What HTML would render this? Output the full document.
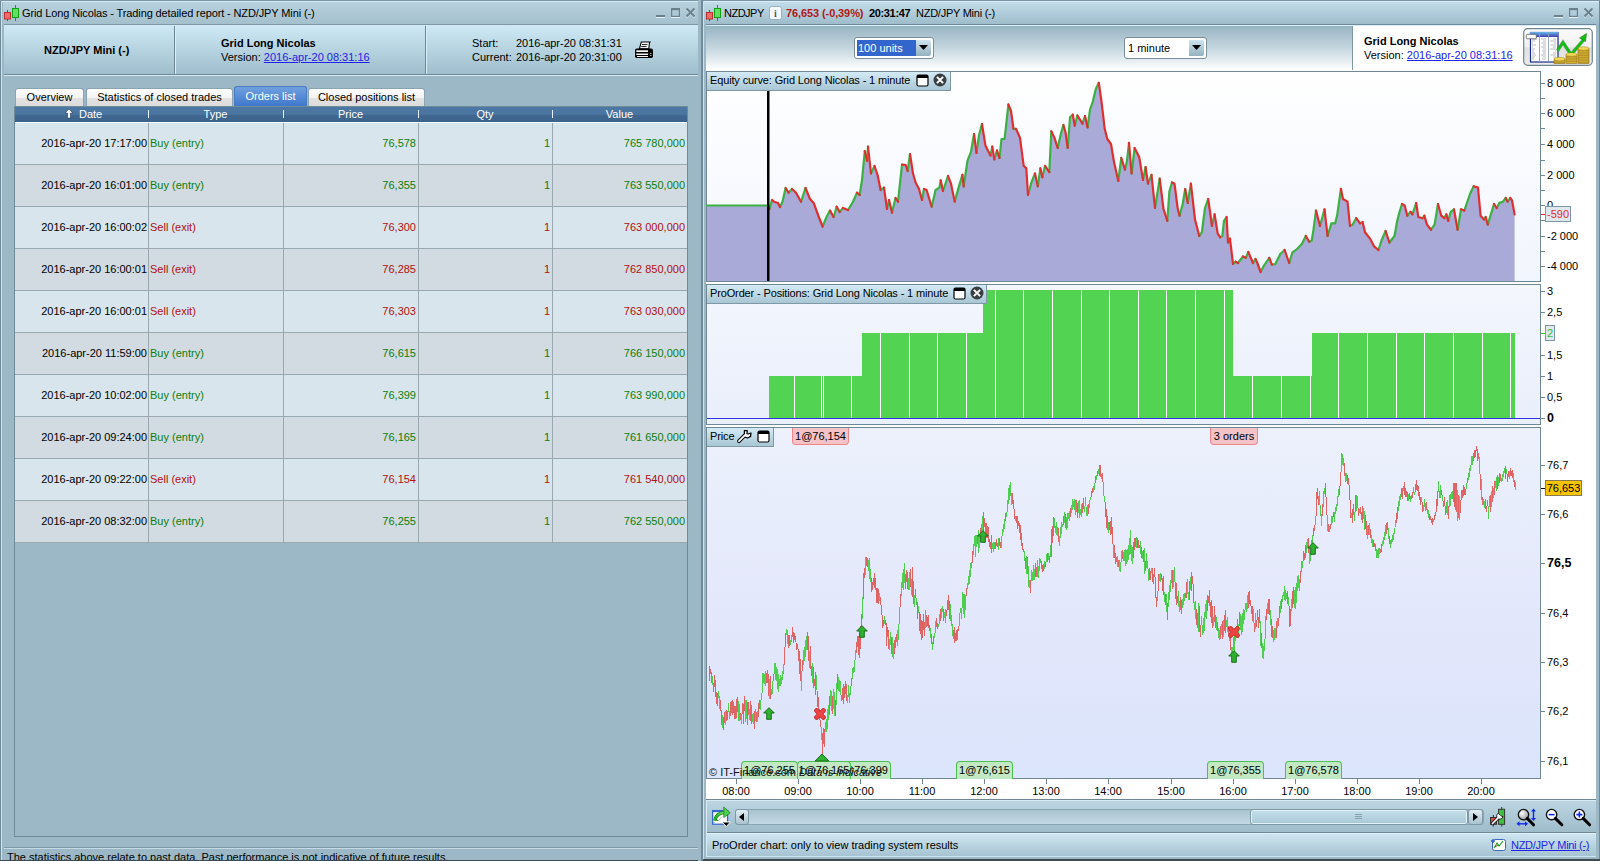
<!DOCTYPE html><html><head><meta charset="utf-8"><style>
*{margin:0;padding:0;box-sizing:border-box}
html,body{width:1600px;height:861px;overflow:hidden;background:#7d97a5;font-family:"Liberation Sans",sans-serif;font-size:11px;color:#000}
.a{position:absolute}
.t{position:absolute;white-space:nowrap;line-height:13px}
.b{font-weight:bold}
.lnk{color:#2323e8;text-decoration:underline}
</style></head><body>
<div class="a" style="left:0;top:0;width:701px;height:861px;background:#9cb8c6;border-left:1px solid #6f8a98"></div>
<div class="a" style="left:1px;top:0;width:1px;height:861px;background:#c9e2ee"></div>
<div class="a" style="left:3px;top:0;width:698px;height:24px;background:linear-gradient(#b9d3df,#a4c0cd);border-top:1px solid #7f98a5"></div>
<div class="a" style="left:0;top:0;width:701px;height:1px;background:#7c95a2"></div>
<div class="a" style="left:2px;top:1px;width:696px;height:1px;background:#d5ecf6"></div>
<svg class="a" style="left:4px;top:5px" width="16" height="18" viewBox="0 0 16 18"><path d="M3.5 5 V16" stroke="#b83030" stroke-width="1"/><rect x="0.5" y="7.5" width="6" height="6.5" fill="#f06a6a" stroke="#b83030"/><path d="M11.5 0 V16" stroke="#10a010" stroke-width="1"/><rect x="8.5" y="3.5" width="6" height="9" fill="#60e060" stroke="#10a010"/></svg>
<div class="t" style="left:22px;top:7px;letter-spacing:-0.12px">Grid Long Nicolas - Trading detailed report - NZD/JPY Mini (-)</div>
<svg class="a" style="left:655px;top:7px" width="42" height="13" viewBox="0 0 42 13"><rect x="1" y="9" width="9" height="2" fill="#e4f2f8"/><rect x="1" y="8" width="9" height="2" fill="#6a818c"/><rect x="16" y="10" width="9" height="1" fill="#e4f2f8"/><rect x="16.6" y="1.6" width="7.8" height="7.8" fill="none" stroke="#6a818c" stroke-width="1.2"/><rect x="16" y="1" width="9" height="2.2" fill="#6a818c"/><path d="M31.5 2.5 L39.5 10.5 M39.5 2.5 L31.5 10.5" stroke="#e4f2f8" stroke-width="1.4"/><path d="M31.5 1.5 L39.5 9.5 M39.5 1.5 L31.5 9.5" stroke="#6a818c" stroke-width="2"/></svg>
<div class="a" style="left:4px;top:24px;width:694px;height:51px;background:linear-gradient(#cfeaf6,#9fbdcc);border-top:1px solid #7f98a5;border-bottom:1px solid #6f8894"></div>
<div class="a" style="left:4px;top:75px;width:694px;height:1px;background:#d5e9f2"></div>
<div class="a" style="left:174px;top:26px;width:1px;height:48px;background:#6f8894"></div>
<div class="a" style="left:175px;top:26px;width:1px;height:48px;background:#d8eef8"></div>
<div class="a" style="left:425px;top:26px;width:1px;height:48px;background:#6f8894"></div>
<div class="a" style="left:426px;top:26px;width:1px;height:48px;background:#d8eef8"></div>
<div class="t b" style="left:44px;top:44px">NZD/JPY Mini (-)</div>
<div class="t b" style="left:221px;top:37px">Grid Long Nicolas</div>
<div class="t" style="left:221px;top:51px">Version: <span class="lnk">2016-apr-20 08:31:16</span></div>
<div class="t" style="left:472px;top:37px">Start:</div>
<div class="t" style="left:516px;top:37px">2016-apr-20 08:31:31</div>
<div class="t" style="left:472px;top:51px">Current:</div>
<div class="t" style="left:516px;top:51px">2016-apr-20 20:31:00</div>
<svg class="a" style="left:634px;top:41px" width="20" height="18" viewBox="0 0 20 18"><path d="M7.3 1 H16 L15.4 2.2 L14.8 7.8 H5.4 Z" fill="#fff" stroke="#000" stroke-width="1.1"/><path d="M8 3.6 H13.5 M7.2 5.6 H12.5" stroke="#000" stroke-width="0.9"/><rect x="1" y="7.6" width="18" height="9.4" rx="1.8" fill="#000"/><path d="M2.3 9.3 H14 V11 H2.3 Z M2.3 12.4 H14 V14.1 H2.3 Z M3 15 H14 V16 H3 Z" fill="#f4f4f4"/><circle cx="16.8" cy="12.3" r="0.6" fill="#fff"/><circle cx="16.8" cy="14.3" r="0.6" fill="#fff"/></svg>
<div class="a" style="left:15px;top:88px;width:69px;height:18px;background:linear-gradient(#ffffff 0%,#f4f4f4 50%,#e2e2e2 55%,#dcdcdc 100%);border:1px solid #8aa4b1;border-bottom:none;border-radius:3px 3px 0 0"></div>
<div class="t" style="left:15px;top:91px;width:69px;text-align:center">Overview</div>
<div class="a" style="left:86px;top:88px;width:147px;height:18px;background:linear-gradient(#ffffff 0%,#f4f4f4 50%,#e2e2e2 55%,#dcdcdc 100%);border:1px solid #8aa4b1;border-bottom:none;border-radius:3px 3px 0 0"></div>
<div class="t" style="left:86px;top:91px;width:147px;text-align:center">Statistics of closed trades</div>
<div class="a" style="left:234px;top:86px;width:73px;height:20px;background:linear-gradient(#6fa0e0,#3f78cc);border:1px solid #4a7bbf;border-bottom:none;border-radius:3px 3px 0 0"></div>
<div class="t" style="left:234px;top:90px;width:73px;text-align:center;color:#fff">Orders list</div>
<div class="a" style="left:308px;top:88px;width:117px;height:18px;background:linear-gradient(#ffffff 0%,#f4f4f4 50%,#e2e2e2 55%,#dcdcdc 100%);border:1px solid #8aa4b1;border-bottom:none;border-radius:3px 3px 0 0"></div>
<div class="t" style="left:308px;top:91px;width:117px;text-align:center">Closed positions list</div>
<div class="a" style="left:14px;top:106px;width:674px;height:731px;border:1px solid #6f8a98"></div>
<div class="a" style="left:15px;top:107px;width:672px;height:15px;background:linear-gradient(#4d78a4 0%,#4a74a0 50%,#3f6790 55%,#3d638c 100%)"></div>
<div class="t" style="left:79px;top:108px;color:#fff">Date</div>
<div class="t" style="left:148px;top:108px;width:135px;text-align:center;color:#fff">Type</div>
<div class="a" style="left:148px;top:110px;width:1px;height:8px;background:#e8f0f8"></div>
<div class="t" style="left:283px;top:108px;width:135px;text-align:center;color:#fff">Price</div>
<div class="a" style="left:283px;top:110px;width:1px;height:8px;background:#e8f0f8"></div>
<div class="t" style="left:418px;top:108px;width:134px;text-align:center;color:#fff">Qty</div>
<div class="a" style="left:418px;top:110px;width:1px;height:8px;background:#e8f0f8"></div>
<div class="t" style="left:552px;top:108px;width:135px;text-align:center;color:#fff">Value</div>
<div class="a" style="left:552px;top:110px;width:1px;height:8px;background:#e8f0f8"></div>
<svg class="a" style="left:64px;top:108px" width="10" height="12" viewBox="0 0 10 12"><path d="M5 1 L9 5 L6.5 5 L6.5 10 L3.5 10 L3.5 5 L1 5 Z" fill="#fff" stroke="#203c60" stroke-width="0.6"/></svg>
<div class="a" style="left:15px;top:123px;width:672px;height:42px;background:#d8e5ec;border-bottom:1px solid #9aa8b2"></div>
<div class="t" style="left:15px;top:137px;width:132px;text-align:right">2016-apr-20 17:17:00</div>
<div class="t" style="left:150px;top:137px;color:#0c800c">Buy (entry)</div>
<div class="t" style="left:283px;top:137px;width:133px;text-align:right;color:#0c800c">76,578</div>
<div class="t" style="left:418px;top:137px;width:132px;text-align:right;color:#0c800c">1</div>
<div class="t" style="left:552px;top:137px;width:133px;text-align:right;color:#0c800c">765 780,000</div>
<div class="a" style="left:15px;top:165px;width:672px;height:42px;background:#d2dae2;border-bottom:1px solid #9aa8b2"></div>
<div class="t" style="left:15px;top:179px;width:132px;text-align:right">2016-apr-20 16:01:00</div>
<div class="t" style="left:150px;top:179px;color:#0c800c">Buy (entry)</div>
<div class="t" style="left:283px;top:179px;width:133px;text-align:right;color:#0c800c">76,355</div>
<div class="t" style="left:418px;top:179px;width:132px;text-align:right;color:#0c800c">1</div>
<div class="t" style="left:552px;top:179px;width:133px;text-align:right;color:#0c800c">763 550,000</div>
<div class="a" style="left:15px;top:207px;width:672px;height:42px;background:#d8e5ec;border-bottom:1px solid #9aa8b2"></div>
<div class="t" style="left:15px;top:221px;width:132px;text-align:right">2016-apr-20 16:00:02</div>
<div class="t" style="left:150px;top:221px;color:#b01010">Sell (exit)</div>
<div class="t" style="left:283px;top:221px;width:133px;text-align:right;color:#b01010">76,300</div>
<div class="t" style="left:418px;top:221px;width:132px;text-align:right;color:#b01010">1</div>
<div class="t" style="left:552px;top:221px;width:133px;text-align:right;color:#b01010">763 000,000</div>
<div class="a" style="left:15px;top:249px;width:672px;height:42px;background:#d2dae2;border-bottom:1px solid #9aa8b2"></div>
<div class="t" style="left:15px;top:263px;width:132px;text-align:right">2016-apr-20 16:00:01</div>
<div class="t" style="left:150px;top:263px;color:#b01010">Sell (exit)</div>
<div class="t" style="left:283px;top:263px;width:133px;text-align:right;color:#b01010">76,285</div>
<div class="t" style="left:418px;top:263px;width:132px;text-align:right;color:#b01010">1</div>
<div class="t" style="left:552px;top:263px;width:133px;text-align:right;color:#b01010">762 850,000</div>
<div class="a" style="left:15px;top:291px;width:672px;height:42px;background:#d8e5ec;border-bottom:1px solid #9aa8b2"></div>
<div class="t" style="left:15px;top:305px;width:132px;text-align:right">2016-apr-20 16:00:01</div>
<div class="t" style="left:150px;top:305px;color:#b01010">Sell (exit)</div>
<div class="t" style="left:283px;top:305px;width:133px;text-align:right;color:#b01010">76,303</div>
<div class="t" style="left:418px;top:305px;width:132px;text-align:right;color:#b01010">1</div>
<div class="t" style="left:552px;top:305px;width:133px;text-align:right;color:#b01010">763 030,000</div>
<div class="a" style="left:15px;top:333px;width:672px;height:42px;background:#d2dae2;border-bottom:1px solid #9aa8b2"></div>
<div class="t" style="left:15px;top:347px;width:132px;text-align:right">2016-apr-20 11:59:00</div>
<div class="t" style="left:150px;top:347px;color:#0c800c">Buy (entry)</div>
<div class="t" style="left:283px;top:347px;width:133px;text-align:right;color:#0c800c">76,615</div>
<div class="t" style="left:418px;top:347px;width:132px;text-align:right;color:#0c800c">1</div>
<div class="t" style="left:552px;top:347px;width:133px;text-align:right;color:#0c800c">766 150,000</div>
<div class="a" style="left:15px;top:375px;width:672px;height:42px;background:#d8e5ec;border-bottom:1px solid #9aa8b2"></div>
<div class="t" style="left:15px;top:389px;width:132px;text-align:right">2016-apr-20 10:02:00</div>
<div class="t" style="left:150px;top:389px;color:#0c800c">Buy (entry)</div>
<div class="t" style="left:283px;top:389px;width:133px;text-align:right;color:#0c800c">76,399</div>
<div class="t" style="left:418px;top:389px;width:132px;text-align:right;color:#0c800c">1</div>
<div class="t" style="left:552px;top:389px;width:133px;text-align:right;color:#0c800c">763 990,000</div>
<div class="a" style="left:15px;top:417px;width:672px;height:42px;background:#d2dae2;border-bottom:1px solid #9aa8b2"></div>
<div class="t" style="left:15px;top:431px;width:132px;text-align:right">2016-apr-20 09:24:00</div>
<div class="t" style="left:150px;top:431px;color:#0c800c">Buy (entry)</div>
<div class="t" style="left:283px;top:431px;width:133px;text-align:right;color:#0c800c">76,165</div>
<div class="t" style="left:418px;top:431px;width:132px;text-align:right;color:#0c800c">1</div>
<div class="t" style="left:552px;top:431px;width:133px;text-align:right;color:#0c800c">761 650,000</div>
<div class="a" style="left:15px;top:459px;width:672px;height:42px;background:#d8e5ec;border-bottom:1px solid #9aa8b2"></div>
<div class="t" style="left:15px;top:473px;width:132px;text-align:right">2016-apr-20 09:22:00</div>
<div class="t" style="left:150px;top:473px;color:#b01010">Sell (exit)</div>
<div class="t" style="left:283px;top:473px;width:133px;text-align:right;color:#b01010">76,154</div>
<div class="t" style="left:418px;top:473px;width:132px;text-align:right;color:#b01010">1</div>
<div class="t" style="left:552px;top:473px;width:133px;text-align:right;color:#b01010">761 540,000</div>
<div class="a" style="left:15px;top:501px;width:672px;height:42px;background:#d2dae2;border-bottom:1px solid #9aa8b2"></div>
<div class="t" style="left:15px;top:515px;width:132px;text-align:right">2016-apr-20 08:32:00</div>
<div class="t" style="left:150px;top:515px;color:#0c800c">Buy (entry)</div>
<div class="t" style="left:283px;top:515px;width:133px;text-align:right;color:#0c800c">76,255</div>
<div class="t" style="left:418px;top:515px;width:132px;text-align:right;color:#0c800c">1</div>
<div class="t" style="left:552px;top:515px;width:133px;text-align:right;color:#0c800c">762 550,000</div>
<div class="a" style="left:15px;top:122px;width:672px;height:1px;background:#fff"></div>
<div class="a" style="left:148px;top:123px;width:1px;height:420px;background:#9aa8b2"></div>
<div class="a" style="left:283px;top:123px;width:1px;height:420px;background:#9aa8b2"></div>
<div class="a" style="left:418px;top:123px;width:1px;height:420px;background:#9aa8b2"></div>
<div class="a" style="left:552px;top:123px;width:1px;height:420px;background:#9aa8b2"></div>
<div class="a" style="left:4px;top:847px;width:694px;height:1px;background:#7f98a5"></div>
<div class="a" style="left:4px;top:848px;width:694px;height:1px;background:#c5dce7"></div>
<div class="t" style="left:7px;top:851px">The statistics above relate to past data. Past performance is not indicative of future results.</div>
<div class="a" style="left:0;top:860px;width:701px;height:1px;background:#3c4a52"></div>
<div class="a" style="left:698px;top:0;width:3px;height:861px;background:#9cb8c6"></div>
<div class="a" style="left:701px;top:0;width:2px;height:861px;background:#71899a"></div>
<div class="a" style="left:703px;top:0;width:897px;height:861px;background:#9cb8c6"></div>
<div class="a" style="left:703px;top:0;width:1px;height:861px;background:#c9e2ee"></div>
<div class="a" style="left:1599px;top:0;width:1px;height:861px;background:#6f8a98"></div>
<div class="a" style="left:703px;top:0;width:897px;height:1px;background:#7c95a2"></div>
<div class="a" style="left:704px;top:1px;width:895px;height:23px;background:linear-gradient(#c4dfeb,#9fbccb)"></div>
<div class="a" style="left:704px;top:1px;width:895px;height:1px;background:#d8eef8"></div>
<svg class="a" style="left:706px;top:5px" width="16" height="18" viewBox="0 0 16 18"><path d="M3.5 5 V16" stroke="#b83030" stroke-width="1"/><rect x="0.5" y="7.5" width="6" height="6.5" fill="#f06a6a" stroke="#b83030"/><path d="M11.5 0 V16" stroke="#10a010" stroke-width="1"/><rect x="8.5" y="3.5" width="6" height="9" fill="#60e060" stroke="#10a010"/></svg>
<div class="t" style="left:724px;top:7px;letter-spacing:-0.5px">NZDJPY</div>
<svg class="a" style="left:769px;top:6px" width="13" height="14" viewBox="0 0 13 14"><rect x="0.5" y="0.5" width="12" height="13" rx="2" fill="#f4f8fa" stroke="#9ab0bc"/><text x="6.5" y="11" font-family="Liberation Serif" font-weight="bold" font-size="10" text-anchor="middle" fill="#4a5a66">i</text></svg>
<div class="t b" style="left:786px;top:7px;color:#b01818;letter-spacing:-0.1px">76,653 (-0,39%)</div>
<div class="t b" style="left:869px;top:7px;letter-spacing:-0.35px">20:31:47</div>
<div class="t" style="left:916px;top:7px;letter-spacing:-0.25px">NZD/JPY Mini (-)</div>
<svg class="a" style="left:1553px;top:7px" width="42" height="13" viewBox="0 0 42 13"><rect x="1" y="9" width="9" height="2" fill="#e4f2f8"/><rect x="1" y="8" width="9" height="2" fill="#6a818c"/><rect x="16" y="10" width="9" height="1" fill="#e4f2f8"/><rect x="16.6" y="1.6" width="7.8" height="7.8" fill="none" stroke="#6a818c" stroke-width="1.2"/><rect x="16" y="1" width="9" height="2.2" fill="#6a818c"/><path d="M31.5 2.5 L39.5 10.5 M39.5 2.5 L31.5 10.5" stroke="#e4f2f8" stroke-width="1.4"/><path d="M31.5 1.5 L39.5 9.5 M39.5 1.5 L31.5 9.5" stroke="#6a818c" stroke-width="2"/></svg>
<div class="a" style="left:706px;top:24px;width:890px;height:1px;background:#70899a"></div>
<div class="a" style="left:706px;top:25px;width:890px;height:1px;background:#d8eef8"></div>
<div class="a" style="left:706px;top:26px;width:646px;height:44px;background:linear-gradient(#98b4c3 0%,#c4d6df 50%,#ffffff 100%)"></div>
<div class="a" style="left:1352px;top:26px;width:244px;height:44px;background:#fff;border-left:1px solid #7f98a5"></div>
<div class="a" style="left:854px;top:37px;width:80px;height:22px;background:#fff;border:1px solid #7b8f99;border-radius:3px"></div>
<div class="a" style="left:857px;top:40px;width:59px;height:16px;background:#3366cc"></div>
<div class="t" style="left:858px;top:42px;color:#fff">100 units</div>
<div class="a" style="left:916px;top:40px;width:15px;height:16px;background:linear-gradient(#cfe5ef,#93b1bf);border-radius:0 2px 2px 0"></div>
<svg class="a" style="left:919px;top:45px" width="9" height="6"><path d="M0 0 H9 L4.5 5 Z" fill="#000"/></svg>
<div class="a" style="left:1124px;top:37px;width:83px;height:22px;background:#fff;border:1px solid #7b8f99;border-radius:3px"></div>
<div class="t" style="left:1128px;top:42px">1 minute</div>
<div class="a" style="left:1189px;top:40px;width:15px;height:16px;background:linear-gradient(#cfe5ef,#93b1bf);border-radius:0 2px 2px 0"></div>
<svg class="a" style="left:1192px;top:45px" width="9" height="6"><path d="M0 0 H9 L4.5 5 Z" fill="#000"/></svg>
<div class="t b" style="left:1364px;top:35px">Grid Long Nicolas</div>
<div class="t" style="left:1364px;top:49px">Version: <span class="lnk">2016-apr-20 08:31:16</span></div>
<svg class="a" style="left:1523px;top:28px" width="70" height="38" viewBox="0 0 70 38"><defs><linearGradient id="rg" x1="0" y1="0" x2="0" y2="1"><stop offset="0" stop-color="#fbfbfb"/><stop offset="0.5" stop-color="#f0f0f0"/><stop offset="0.52" stop-color="#e0e0e0"/><stop offset="1" stop-color="#ececec"/></linearGradient><linearGradient id="th" x1="0" y1="0" x2="0" y2="1"><stop offset="0" stop-color="#68b8e8"/><stop offset="1" stop-color="#4040b0"/></linearGradient></defs><rect x="0.7" y="0.7" width="68.6" height="36.6" rx="4" fill="url(#rg)" stroke="#6f8590" stroke-width="1.2"/><rect x="7.5" y="4.5" width="27.5" height="29.5" fill="#fff" stroke="#1a2a90" stroke-width="1.2"/><rect x="7" y="4" width="28" height="5" fill="url(#th)"/><path d="M16.5 5 V33.5 M25.5 5 V33.5" stroke="#8aa0b8" stroke-width="0.9"/><path d="M9 11 H14 M9 13 H12 M9 15 H10 M9 17 H13 M9 19 H10 M9 21 H12 M9 23 H11 M9 25 H12 M9 27 H13 M9 29 H12 M9 31 H11 M18 11 H23 M20 13 H23 M18.5 15 H23 M20 17 H23 M18 19 H23 M20 21 H23 M19 23 H23 M20 25 H23 M18 27 H23 M20 29 H23 M19 31 H23 M30 11 H33 M27 13 H33 M31 15 H33 M27.5 17 H33 M30 19 H33 M27 21 H33 M32 23 H33 M30 25 H33 M27.5 27 H33 M30 29 H33" stroke="#777" stroke-width="0.5"/><rect x="3.3" y="6.3" width="10" height="4.5" rx="1" fill="#fff" stroke="#555" stroke-width="0.8"/><path d="M34.5 22.5 L40 14.5 L48 26.5 L60.5 12" fill="none" stroke="#000" stroke-width="3.6" stroke-linejoin="miter" opacity="0.35"/><path d="M34.5 22.5 L40 14.5 L48 26.5 L60.5 12" fill="none" stroke="#10c010" stroke-width="2.6" stroke-linejoin="miter"/><path d="M56.5 10 L63.5 5.5 L62.5 13.5 Z" fill="#10c010" stroke="#0a6a0a" stroke-width="0.5"/><rect x="31" y="31" width="11" height="4.5" fill="#d8b434" stroke="#8a6a18" stroke-width="0.6"/><path d="M31 33.0H42M31 34.7H42" stroke="#9a7a20" stroke-width="0.6"/><ellipse cx="36.5" cy="31" rx="5.5" ry="1.8" fill="#f0d858" stroke="#a08020" stroke-width="0.5"/><rect x="43" y="26.5" width="11" height="9.0" fill="#d8b434" stroke="#8a6a18" stroke-width="0.6"/><path d="M43 28.5H54M43 30.2H54M43 31.9H54M43 33.6H54" stroke="#9a7a20" stroke-width="0.6"/><ellipse cx="48.5" cy="26.5" rx="5.5" ry="1.8" fill="#f0d858" stroke="#a08020" stroke-width="0.5"/><rect x="55" y="20.5" width="11" height="15.0" fill="#d8b434" stroke="#8a6a18" stroke-width="0.6"/><path d="M55 22.5H66M55 24.2H66M55 25.9H66M55 27.6H66M55 29.3H66M55 31.0H66M55 32.7H66M55 34.4H66" stroke="#9a7a20" stroke-width="0.6"/><ellipse cx="60.5" cy="20.5" rx="5.5" ry="1.8" fill="#f0d858" stroke="#a08020" stroke-width="0.5"/></svg>
<div class="a" style="left:706px;top:70px;width:890px;height:729px;background:#fff"></div>
<div class="a" style="left:706px;top:71px;width:835px;height:211px;background:linear-gradient(#ffffff,#f1f5fd);border:1px solid #6f8894"></div>

<div class="a" style="left:706px;top:284px;width:835px;height:141px;background:linear-gradient(#f3f6fd,#e9effb);border:1px solid #6f8894"></div>
<div class="a" style="left:706px;top:427px;width:835px;height:352px;background:linear-gradient(#ecf1fc 0%,#e2e6fb 60%,#dbe5fb 100%);border:1px solid #6f8894"></div>
<svg class="a" style="left:0;top:0" width="1600" height="861" viewBox="0 0 1600 861"><polygon points="707,281 707.0,205.5 768.0,205.5 769.5,209.0 772.0,200.0 774.0,201.7 778.0,203.0 780.0,207.0 782.5,201.7 785.6,188.0 788.6,192.7 792.0,189.0 796.0,192.7 801.0,201.7 805.5,188.0 810.0,199.0 813.7,203.0 818.8,217.0 822.6,226.5 826.5,217.0 830.0,210.6 833.6,217.0 836.7,206.7 839.7,212.0 843.0,208.0 848.0,210.0 853.0,201.7 857.0,192.7 859.7,195.0 862.0,180.0 864.8,151.0 867.0,160.8 868.0,146.7 871.0,173.5 874.5,166.0 877.6,175.0 880.6,190.0 884.0,187.6 887.0,209.0 889.0,200.0 892.0,212.7 895.5,198.0 898.0,201.7 902.0,164.6 905.7,165.0 907.7,171.0 910.0,154.0 913.0,173.5 915.6,182.5 919.0,189.0 922.0,200.0 924.0,189.0 926.6,190.0 931.7,206.7 935.6,190.0 939.4,187.6 940.7,180.4 943.0,191.0 948.0,176.0 951.0,183.7 954.7,201.6 958.6,187.6 962.4,174.8 963.7,186.3 967.5,160.7 971.0,151.8 974.0,134.0 976.5,153.0 979.0,135.2 982.0,124.0 985.4,145.4 990.5,155.6 992.3,146.7 994.3,159.5 997.0,150.5 999.5,158.0 1001.5,139.0 1004.6,139.0 1008.4,104.5 1011.0,111.0 1013.5,128.8 1016.0,128.8 1020.0,137.7 1023.7,165.8 1026.3,168.4 1028.0,195.0 1031.4,182.5 1035.0,173.5 1037.8,186.3 1040.4,168.4 1042.4,177.3 1045.0,165.8 1049.3,172.2 1051.3,131.3 1054.4,137.7 1057.7,148.0 1060.8,134.0 1063.4,125.0 1065.6,132.6 1067.7,148.0 1070.0,117.3 1072.8,114.7 1074.8,125.7 1077.4,115.5 1082.5,123.7 1085.0,116.0 1087.6,127.5 1090.0,109.6 1092.7,102.0 1095.8,89.0 1098.8,82.8 1101.4,100.7 1104.7,128.8 1107.3,139.0 1111.0,144.0 1114.0,162.0 1118.3,181.0 1121.3,158.0 1125.0,169.6 1127.0,160.7 1129.0,142.8 1131.6,173.5 1134.6,148.0 1139.2,157.0 1143.0,180.0 1145.6,167.0 1148.0,183.7 1151.5,174.8 1155.0,208.0 1159.7,178.6 1163.5,209.0 1167.3,220.8 1169.4,191.4 1172.0,182.5 1174.5,183.7 1177.6,208.0 1179.6,215.7 1182.7,204.0 1185.2,189.0 1187.8,203.0 1190.9,183.7 1195.0,219.5 1199.3,236.0 1201.9,232.0 1205.0,208.0 1208.2,199.0 1212.0,226.0 1214.6,214.4 1217.7,233.6 1220.2,237.4 1222.3,236.0 1224.0,220.8 1226.6,217.0 1228.0,242.5 1230.0,238.6 1233.0,264.0 1235.6,261.7 1238.0,263.0 1243.0,256.5 1245.8,257.8 1248.3,252.0 1253.0,263.0 1255.5,259.0 1257.3,263.0 1260.6,272.0 1264.0,265.5 1269.3,257.8 1271.9,264.7 1275.2,264.2 1280.3,254.0 1284.6,250.0 1289.2,263.0 1292.3,252.7 1297.0,249.0 1302.0,243.8 1305.8,236.0 1309.2,241.7 1311.7,240.7 1313.5,229.7 1316.0,210.6 1320.0,226.0 1324.5,209.3 1327.6,236.0 1331.4,223.3 1335.2,223.3 1337.3,214.4 1340.9,188.8 1343.0,199.0 1347.5,201.6 1350.0,226.0 1352.6,224.6 1356.2,218.2 1360.0,223.3 1362.6,222.0 1365.0,232.3 1370.0,238.6 1374.0,246.3 1378.4,250.0 1381.7,240.0 1385.6,231.0 1389.4,242.5 1394.5,236.0 1397.0,222.0 1398.8,214.4 1402.0,204.0 1404.7,205.4 1407.3,215.7 1410.6,211.8 1412.4,214.4 1416.2,203.0 1418.3,217.0 1422.6,218.2 1424.4,215.7 1427.0,224.6 1431.0,229.7 1434.6,224.6 1438.0,204.0 1441.3,215.7 1444.3,218.2 1446.4,214.4 1448.2,221.0 1450.7,211.8 1454.0,209.3 1457.6,229.7 1461.0,209.3 1464.3,210.6 1470.0,194.0 1473.7,186.3 1478.0,187.6 1480.6,215.7 1484.0,219.5 1485.7,217.0 1487.8,224.6 1494.0,204.0 1496.7,208.0 1499.3,203.0 1503.0,201.6 1505.7,198.0 1507.7,201.6 1510.3,198.0 1512.0,200.3 1514.6,214.4 1514.6,281" fill="#aaaad9"/><path d="M707.0 205.5L768.0 205.5M769.5 209.0L772.0 200.0M780.0 207.0L782.5 201.7M782.5 201.7L785.6 188.0M788.6 192.7L792.0 189.0M801.0 201.7L805.5 188.0M822.6 226.5L826.5 217.0M826.5 217.0L830.0 210.6M833.6 217.0L836.7 206.7M839.7 212.0L843.0 208.0M848.0 210.0L853.0 201.7M853.0 201.7L857.0 192.7M859.7 195.0L862.0 180.0M862.0 180.0L864.8 151.0M867.0 160.8L868.0 146.7M871.0 173.5L874.5 166.0M880.6 190.0L884.0 187.6M887.0 209.0L889.0 200.0M892.0 212.7L895.5 198.0M898.0 201.7L902.0 164.6M907.7 171.0L910.0 154.0M922.0 200.0L924.0 189.0M931.7 206.7L935.6 190.0M935.6 190.0L939.4 187.6M939.4 187.6L940.7 180.4M943.0 191.0L948.0 176.0M954.7 201.6L958.6 187.6M958.6 187.6L962.4 174.8M963.7 186.3L967.5 160.7M967.5 160.7L971.0 151.8M971.0 151.8L974.0 134.0M976.5 153.0L979.0 135.2M979.0 135.2L982.0 124.0M990.5 155.6L992.3 146.7M994.3 159.5L997.0 150.5M999.5 158.0L1001.5 139.0M1001.5 139.0L1004.6 139.0M1004.6 139.0L1008.4 104.5M1013.5 128.8L1016.0 128.8M1028.0 195.0L1031.4 182.5M1031.4 182.5L1035.0 173.5M1037.8 186.3L1040.4 168.4M1042.4 177.3L1045.0 165.8M1049.3 172.2L1051.3 131.3M1057.7 148.0L1060.8 134.0M1060.8 134.0L1063.4 125.0M1067.7 148.0L1070.0 117.3M1070.0 117.3L1072.8 114.7M1074.8 125.7L1077.4 115.5M1082.5 123.7L1085.0 116.0M1087.6 127.5L1090.0 109.6M1090.0 109.6L1092.7 102.0M1092.7 102.0L1095.8 89.0M1095.8 89.0L1098.8 82.8M1118.3 181.0L1121.3 158.0M1125.0 169.6L1127.0 160.7M1127.0 160.7L1129.0 142.8M1131.6 173.5L1134.6 148.0M1143.0 180.0L1145.6 167.0M1148.0 183.7L1151.5 174.8M1155.0 208.0L1159.7 178.6M1167.3 220.8L1169.4 191.4M1169.4 191.4L1172.0 182.5M1179.6 215.7L1182.7 204.0M1182.7 204.0L1185.2 189.0M1187.8 203.0L1190.9 183.7M1199.3 236.0L1201.9 232.0M1201.9 232.0L1205.0 208.0M1205.0 208.0L1208.2 199.0M1212.0 226.0L1214.6 214.4M1220.2 237.4L1222.3 236.0M1222.3 236.0L1224.0 220.8M1224.0 220.8L1226.6 217.0M1228.0 242.5L1230.0 238.6M1233.0 264.0L1235.6 261.7M1238.0 263.0L1243.0 256.5M1245.8 257.8L1248.3 252.0M1253.0 263.0L1255.5 259.0M1260.6 272.0L1264.0 265.5M1264.0 265.5L1269.3 257.8M1271.9 264.7L1275.2 264.2M1275.2 264.2L1280.3 254.0M1280.3 254.0L1284.6 250.0M1289.2 263.0L1292.3 252.7M1292.3 252.7L1297.0 249.0M1297.0 249.0L1302.0 243.8M1302.0 243.8L1305.8 236.0M1309.2 241.7L1311.7 240.7M1311.7 240.7L1313.5 229.7M1313.5 229.7L1316.0 210.6M1320.0 226.0L1324.5 209.3M1327.6 236.0L1331.4 223.3M1331.4 223.3L1335.2 223.3M1335.2 223.3L1337.3 214.4M1337.3 214.4L1340.9 188.8M1350.0 226.0L1352.6 224.6M1352.6 224.6L1356.2 218.2M1360.0 223.3L1362.6 222.0M1378.4 250.0L1381.7 240.0M1381.7 240.0L1385.6 231.0M1389.4 242.5L1394.5 236.0M1394.5 236.0L1397.0 222.0M1397.0 222.0L1398.8 214.4M1398.8 214.4L1402.0 204.0M1407.3 215.7L1410.6 211.8M1412.4 214.4L1416.2 203.0M1422.6 218.2L1424.4 215.7M1431.0 229.7L1434.6 224.6M1434.6 224.6L1438.0 204.0M1444.3 218.2L1446.4 214.4M1448.2 221.0L1450.7 211.8M1450.7 211.8L1454.0 209.3M1457.6 229.7L1461.0 209.3M1464.3 210.6L1470.0 194.0M1470.0 194.0L1473.7 186.3M1484.0 219.5L1485.7 217.0M1487.8 224.6L1494.0 204.0M1496.7 208.0L1499.3 203.0M1499.3 203.0L1503.0 201.6M1503.0 201.6L1505.7 198.0M1507.7 201.6L1510.3 198.0" stroke="#3cb043" stroke-width="2.2" fill="none" stroke-linecap="round"/><path d="M768.0 205.5L769.5 209.0M772.0 200.0L774.0 201.7M774.0 201.7L778.0 203.0M778.0 203.0L780.0 207.0M785.6 188.0L788.6 192.7M792.0 189.0L796.0 192.7M796.0 192.7L801.0 201.7M805.5 188.0L810.0 199.0M810.0 199.0L813.7 203.0M813.7 203.0L818.8 217.0M818.8 217.0L822.6 226.5M830.0 210.6L833.6 217.0M836.7 206.7L839.7 212.0M843.0 208.0L848.0 210.0M857.0 192.7L859.7 195.0M864.8 151.0L867.0 160.8M868.0 146.7L871.0 173.5M874.5 166.0L877.6 175.0M877.6 175.0L880.6 190.0M884.0 187.6L887.0 209.0M889.0 200.0L892.0 212.7M895.5 198.0L898.0 201.7M902.0 164.6L905.7 165.0M905.7 165.0L907.7 171.0M910.0 154.0L913.0 173.5M913.0 173.5L915.6 182.5M915.6 182.5L919.0 189.0M919.0 189.0L922.0 200.0M924.0 189.0L926.6 190.0M926.6 190.0L931.7 206.7M940.7 180.4L943.0 191.0M948.0 176.0L951.0 183.7M951.0 183.7L954.7 201.6M962.4 174.8L963.7 186.3M974.0 134.0L976.5 153.0M982.0 124.0L985.4 145.4M985.4 145.4L990.5 155.6M992.3 146.7L994.3 159.5M997.0 150.5L999.5 158.0M1008.4 104.5L1011.0 111.0M1011.0 111.0L1013.5 128.8M1016.0 128.8L1020.0 137.7M1020.0 137.7L1023.7 165.8M1023.7 165.8L1026.3 168.4M1026.3 168.4L1028.0 195.0M1035.0 173.5L1037.8 186.3M1040.4 168.4L1042.4 177.3M1045.0 165.8L1049.3 172.2M1051.3 131.3L1054.4 137.7M1054.4 137.7L1057.7 148.0M1063.4 125.0L1065.6 132.6M1065.6 132.6L1067.7 148.0M1072.8 114.7L1074.8 125.7M1077.4 115.5L1082.5 123.7M1085.0 116.0L1087.6 127.5M1098.8 82.8L1101.4 100.7M1101.4 100.7L1104.7 128.8M1104.7 128.8L1107.3 139.0M1107.3 139.0L1111.0 144.0M1111.0 144.0L1114.0 162.0M1114.0 162.0L1118.3 181.0M1121.3 158.0L1125.0 169.6M1129.0 142.8L1131.6 173.5M1134.6 148.0L1139.2 157.0M1139.2 157.0L1143.0 180.0M1145.6 167.0L1148.0 183.7M1151.5 174.8L1155.0 208.0M1159.7 178.6L1163.5 209.0M1163.5 209.0L1167.3 220.8M1172.0 182.5L1174.5 183.7M1174.5 183.7L1177.6 208.0M1177.6 208.0L1179.6 215.7M1185.2 189.0L1187.8 203.0M1190.9 183.7L1195.0 219.5M1195.0 219.5L1199.3 236.0M1208.2 199.0L1212.0 226.0M1214.6 214.4L1217.7 233.6M1217.7 233.6L1220.2 237.4M1226.6 217.0L1228.0 242.5M1230.0 238.6L1233.0 264.0M1235.6 261.7L1238.0 263.0M1243.0 256.5L1245.8 257.8M1248.3 252.0L1253.0 263.0M1255.5 259.0L1257.3 263.0M1257.3 263.0L1260.6 272.0M1269.3 257.8L1271.9 264.7M1284.6 250.0L1289.2 263.0M1305.8 236.0L1309.2 241.7M1316.0 210.6L1320.0 226.0M1324.5 209.3L1327.6 236.0M1340.9 188.8L1343.0 199.0M1343.0 199.0L1347.5 201.6M1347.5 201.6L1350.0 226.0M1356.2 218.2L1360.0 223.3M1362.6 222.0L1365.0 232.3M1365.0 232.3L1370.0 238.6M1370.0 238.6L1374.0 246.3M1374.0 246.3L1378.4 250.0M1385.6 231.0L1389.4 242.5M1402.0 204.0L1404.7 205.4M1404.7 205.4L1407.3 215.7M1410.6 211.8L1412.4 214.4M1416.2 203.0L1418.3 217.0M1418.3 217.0L1422.6 218.2M1424.4 215.7L1427.0 224.6M1427.0 224.6L1431.0 229.7M1438.0 204.0L1441.3 215.7M1441.3 215.7L1444.3 218.2M1446.4 214.4L1448.2 221.0M1454.0 209.3L1457.6 229.7M1461.0 209.3L1464.3 210.6M1473.7 186.3L1478.0 187.6M1478.0 187.6L1480.6 215.7M1480.6 215.7L1484.0 219.5M1485.7 217.0L1487.8 224.6M1494.0 204.0L1496.7 208.0M1505.7 198.0L1507.7 201.6M1510.3 198.0L1512.0 200.3M1512.0 200.3L1514.6 214.4" stroke="#e02f2f" stroke-width="2.2" fill="none" stroke-linecap="round"/><rect x="767" y="89" width="2.5" height="192" fill="#000"/><rect x="769" y="376" width="93" height="42" fill="#52d352"/><rect x="862" y="333" width="121" height="85" fill="#52d352"/><rect x="983" y="290" width="250" height="128" fill="#52d352"/><rect x="1233" y="376" width="79" height="42" fill="#52d352"/><rect x="1312" y="333" width="203" height="85" fill="#52d352"/><rect x="794" y="375.7" width="1" height="42.3" fill="#fff"/><rect x="821" y="375.7" width="1" height="42.3" fill="#fff"/><rect x="851" y="375.7" width="1" height="42.3" fill="#fff"/><rect x="880" y="333.1" width="1" height="84.9" fill="#fff"/><rect x="909" y="333.1" width="1" height="84.9" fill="#fff"/><rect x="937" y="333.1" width="1" height="84.9" fill="#fff"/><rect x="966" y="333.1" width="1" height="84.9" fill="#fff"/><rect x="995" y="290.5" width="1" height="127.5" fill="#fff"/><rect x="1023" y="290.5" width="1" height="127.5" fill="#fff"/><rect x="1052" y="290.5" width="1" height="127.5" fill="#fff"/><rect x="1081" y="290.5" width="1" height="127.5" fill="#fff"/><rect x="1109" y="290.5" width="1" height="127.5" fill="#fff"/><rect x="1138" y="290.5" width="1" height="127.5" fill="#fff"/><rect x="1166" y="290.5" width="1" height="127.5" fill="#fff"/><rect x="1195" y="290.5" width="1" height="127.5" fill="#fff"/><rect x="1224" y="290.5" width="1" height="127.5" fill="#fff"/><rect x="1252" y="375.7" width="1" height="42.3" fill="#fff"/><rect x="1281" y="375.7" width="1" height="42.3" fill="#fff"/><rect x="1310" y="375.7" width="1" height="42.3" fill="#fff"/><rect x="1338" y="333.1" width="1" height="84.9" fill="#fff"/><rect x="1367" y="333.1" width="1" height="84.9" fill="#fff"/><rect x="1396" y="333.1" width="1" height="84.9" fill="#fff"/><rect x="1424" y="333.1" width="1" height="84.9" fill="#fff"/><rect x="1453" y="333.1" width="1" height="84.9" fill="#fff"/><rect x="1482" y="333.1" width="1" height="84.9" fill="#fff"/><rect x="1510" y="333.1" width="1" height="84.9" fill="#fff"/><rect x="823" y="375.7" width="1" height="42.3" fill="#fff"/><rect x="707" y="418" width="833" height="1" fill="#3030e0"/><path d="M712.5 676V685M718.5 691V698M719.5 696V709M722.5 715V728M725.5 711V725M728.5 703V712M729.5 711V719M738.5 701V721M739.5 704V721M741.5 714V724M745.5 700V722M746.5 700V719M749.5 709V720M752.5 714V722M753.5 713V724M755.5 709V721M757.5 711V722M760.5 700V710M761.5 693V700M762.5 673V693M763.5 673V683M764.5 674V684M765.5 671V686M769.5 679V699M771.5 689V695M772.5 681V694M774.5 663V674M775.5 663V680M776.5 667V681M777.5 669V689M778.5 674V692M779.5 679V686M780.5 675V686M781.5 677V684M782.5 671V680M783.5 664V674M786.5 629V635M787.5 630V644M790.5 640V645M791.5 635V642M801.5 671V691M803.5 650V665M804.5 647V661M805.5 640V657M806.5 636V650M809.5 651V668M812.5 663V683M816.5 675V690M821.5 727V740M825.5 722V732M826.5 719V732M827.5 709V729M828.5 705V720M830.5 690V706M831.5 691V711M833.5 689V709M834.5 692V716M836.5 683V705M838.5 677V691M839.5 680V692M840.5 681V695M847.5 695V703M848.5 685V697M849.5 693V703M850.5 686V695M852.5 668V679M853.5 667V673M854.5 660V672M855.5 650V660M862.5 597V619M865.5 557V575M868.5 560V571M869.5 558V579M870.5 569V582M879.5 593V601M884.5 616V624M889.5 639V650M890.5 632V645M892.5 637V657M893.5 643V659M897.5 630V646M898.5 624V640M899.5 607V624M901.5 582V596M902.5 573V588M903.5 569V590M904.5 563V583M908.5 578V590M909.5 572V590M911.5 579V595M914.5 595V607M916.5 598V605M918.5 606V613M925.5 610V628M930.5 628V638M932.5 642V650M934.5 633V638M935.5 621V633M938.5 624V627M939.5 614V624M941.5 608V618M942.5 606V612M944.5 612V618M945.5 609V623M950.5 604V621M951.5 615V626M952.5 624V636M959.5 613V626M960.5 608V613M961.5 608V619M962.5 592V608M963.5 594V614M964.5 594V618M965.5 595V610M967.5 583V589M968.5 576V585M969.5 570V584M970.5 563V577M971.5 562V568M973.5 544V555M974.5 536V546M975.5 535V557M976.5 535V547M978.5 530V553M979.5 534V548M981.5 524V534M982.5 516V536M992.5 543V549M993.5 542V552M994.5 542V549M998.5 538V550M1001.5 536V548M1002.5 529V536M1003.5 524V532M1004.5 519V529M1006.5 512V517M1007.5 500V512M1008.5 488V504M1009.5 485V500M1010.5 482V496M1011.5 493V505M1015.5 516V521M1024.5 551V561M1026.5 556V574M1028.5 566V587M1029.5 580V588M1031.5 570V581M1032.5 572V581M1033.5 565V580M1034.5 569V580M1037.5 560V577M1038.5 566V578M1039.5 558V571M1040.5 559V563M1044.5 561V569M1046.5 554V562M1048.5 553V560M1050.5 545V557M1054.5 518V528M1055.5 526V533M1056.5 522V535M1057.5 527V536M1059.5 536V546M1060.5 527V538M1061.5 522V534M1062.5 524V527M1064.5 512V523M1066.5 517V530M1067.5 513V528M1068.5 513V519M1069.5 511V521M1071.5 505V513M1072.5 499V510M1073.5 501V507M1074.5 499V510M1075.5 500V515M1078.5 501V513M1079.5 500V518M1080.5 509V515M1081.5 504V517M1084.5 506V512M1085.5 497V506M1086.5 507V516M1087.5 505V516M1089.5 500V508M1090.5 497V500M1093.5 486V492M1094.5 483V490M1096.5 475V480M1098.5 469V474M1101.5 474V479M1103.5 482V496M1104.5 496V502M1108.5 522V533M1113.5 544V558M1117.5 556V567M1119.5 560V571M1120.5 562V572M1121.5 551V562M1123.5 552V561M1124.5 550V561M1125.5 549V566M1126.5 550V564M1127.5 549V562M1128.5 545V560M1129.5 538V555M1130.5 530V554M1131.5 545V561M1132.5 547V564M1136.5 537V548M1140.5 541V554M1142.5 551V559M1144.5 548V574M1146.5 553V568M1147.5 561V569M1148.5 569V581M1151.5 568V573M1157.5 591V601M1159.5 574V581M1160.5 573V582M1164.5 592V602M1166.5 594V612M1168.5 592V607M1169.5 585V600M1170.5 580V592M1171.5 570V583M1173.5 570V587M1174.5 567V582M1178.5 591V607M1179.5 601V612M1182.5 599V608M1183.5 594V605M1184.5 593V601M1187.5 579V594M1188.5 592V600M1190.5 577V590M1194.5 602V610M1195.5 601V619M1198.5 603V632M1201.5 616V625M1202.5 625V635M1203.5 618V633M1204.5 612V631M1205.5 604V617M1206.5 600V619M1213.5 617V626M1216.5 617V630M1218.5 628V638M1219.5 630V640M1221.5 624V635M1223.5 620V637M1226.5 620V627M1227.5 617V632M1229.5 627V641M1231.5 647V656M1232.5 647V656M1233.5 637V650M1234.5 635V652M1235.5 631V641M1236.5 626V637M1238.5 624V638M1240.5 614V630M1241.5 616V635M1242.5 613V632M1243.5 609V624M1244.5 610V620M1245.5 603V610M1246.5 603V612M1247.5 595V609M1253.5 609V623M1255.5 613V629M1260.5 621V646M1262.5 643V658M1263.5 646V659M1264.5 639V651M1265.5 616V639M1267.5 603V614M1270.5 610V625M1273.5 630V642M1274.5 628V640M1275.5 628V638M1277.5 618V628M1280.5 601V613M1282.5 595V602M1283.5 592V596M1284.5 586V600M1285.5 590V601M1286.5 593V599M1288.5 597V606M1291.5 599V611M1294.5 590V608M1295.5 587V609M1296.5 583V603M1297.5 576V591M1298.5 575V588M1299.5 579V591M1301.5 561V572M1302.5 561V568M1306.5 542V553M1307.5 539V548M1309.5 548V564M1310.5 553V561M1311.5 540V553M1312.5 535V544M1315.5 516V525M1319.5 491V505M1320.5 505V516M1321.5 514V526M1323.5 491V507M1324.5 488V494M1327.5 515V531M1329.5 526V532M1331.5 516V525M1332.5 516V523M1334.5 512V522M1335.5 507V514M1336.5 504V511M1337.5 496V506M1338.5 489V497M1341.5 453V472M1342.5 454V465M1343.5 458V466M1345.5 473V482M1346.5 473V481M1351.5 513V518M1354.5 512V521M1356.5 495V511M1357.5 496V508M1359.5 509V513M1363.5 508V519M1364.5 511V530M1367.5 526V539M1369.5 523V535M1371.5 535V543M1372.5 539V547M1376.5 549V558M1377.5 550V558M1378.5 548V558M1379.5 548V554M1382.5 541V546M1383.5 537V544M1384.5 532V540M1385.5 525V536M1388.5 528V539M1390.5 540V548M1391.5 539V544M1392.5 535V542M1393.5 533V540M1394.5 528V534M1395.5 520V527M1398.5 501V511M1399.5 496V506M1400.5 494V500M1403.5 486V491M1408.5 494V501M1410.5 496V502M1413.5 487V493M1414.5 492V495M1421.5 497V502M1423.5 505V511M1424.5 499V507M1425.5 503V511M1427.5 509V514M1428.5 510V518M1433.5 519V522M1438.5 481V492M1439.5 491V498M1440.5 485V498M1442.5 495V501M1446.5 502V513M1447.5 500V515M1449.5 495V507M1450.5 494V506M1451.5 492V499M1452.5 491V499M1457.5 490V521M1459.5 496V520M1466.5 483V489M1468.5 473V480M1469.5 468V477M1470.5 465V471M1471.5 456V465M1472.5 456V465M1479.5 457V474M1481.5 479V500M1483.5 499V505M1484.5 501V508M1488.5 506V519M1489.5 496V507M1491.5 491V507M1493.5 488V498M1495.5 481V488M1496.5 477V491M1498.5 477V486M1501.5 478V482M1502.5 474V481M1503.5 471V477M1504.5 468V473M1506.5 469V474M1509.5 471V479M1513.5 473V482M1515.5 482V490" stroke="#4fcf4f" stroke-width="1" fill="none" shape-rendering="crispEdges"/><path d="M709.5 666V681M710.5 669V674M711.5 672V683M713.5 683V692M714.5 675V687M715.5 680V697M716.5 692V704M717.5 693V706M720.5 700V711M721.5 710V725M723.5 717V730M724.5 712V723M726.5 710V721M727.5 711V720M730.5 702V716M731.5 701V713M732.5 700V715M733.5 702V713M734.5 706V719M735.5 706V719M736.5 699V718M737.5 697V712M740.5 713V720M742.5 703V714M743.5 704V724M744.5 696V711M747.5 702V725M748.5 702V715M750.5 701V721M751.5 705V724M754.5 711V729M756.5 712V722M758.5 703V717M759.5 700V709M766.5 673V683M767.5 670V683M768.5 674V696M770.5 676V699M773.5 674V681M784.5 647V665M785.5 633V647M788.5 635V648M789.5 635V646M792.5 627V637M793.5 632V643M794.5 633V640M795.5 636V642M796.5 643V650M797.5 644V649M798.5 649V661M799.5 651V674M800.5 659V681M802.5 660V671M807.5 632V650M808.5 636V661M810.5 646V669M811.5 666V676M813.5 667V688M814.5 679V686M815.5 672V695M817.5 691V707M818.5 697V709M819.5 709V720M820.5 720V727M822.5 733V754M823.5 728V744M824.5 729V747M829.5 696V715M832.5 696V714M835.5 700V716M837.5 674V689M841.5 695V701M842.5 688V700M843.5 684V704M844.5 686V698M845.5 681V694M846.5 684V701M851.5 678V686M856.5 642V653M857.5 636V647M858.5 636V655M859.5 634V658M860.5 626V649M861.5 614V631M863.5 573V599M864.5 568V578M866.5 557V566M867.5 558V567M871.5 578V592M872.5 582V590M873.5 578V585M874.5 573V588M875.5 578V590M876.5 588V603M877.5 588V603M878.5 589V604M880.5 597V605M881.5 605V615M882.5 615V628M883.5 620V626M885.5 620V625M886.5 623V646M887.5 627V637M888.5 630V649M891.5 637V654M894.5 640V654M895.5 637V648M896.5 634V642M900.5 594V607M905.5 574V589M906.5 570V582M907.5 572V589M910.5 569V587M912.5 567V597M913.5 581V604M915.5 589V598M917.5 602V619M919.5 612V631M920.5 614V634M921.5 620V640M922.5 621V638M923.5 614V630M924.5 622V636M926.5 615V627M927.5 617V626M928.5 615V628M929.5 625V631M931.5 634V644M933.5 636V644M936.5 618V627M937.5 623V629M940.5 609V621M943.5 609V621M946.5 610V616M947.5 600V610M948.5 595V610M949.5 601V619M953.5 630V639M954.5 627V643M955.5 633V641M956.5 630V641M957.5 629V640M958.5 626V631M966.5 588V596M972.5 551V563M977.5 535V544M980.5 528V539M983.5 512V535M984.5 518V527M985.5 523V534M986.5 523V538M987.5 526V538M988.5 527V542M989.5 539V547M990.5 542V549M991.5 535V553M995.5 542V549M996.5 539V546M997.5 543V547M999.5 538V546M1000.5 542V548M1005.5 513V521M1012.5 493V504M1013.5 500V509M1014.5 509V519M1016.5 516V523M1017.5 516V529M1018.5 521V526M1019.5 523V533M1020.5 525V540M1021.5 533V546M1022.5 543V550M1023.5 549V552M1025.5 558V569M1027.5 557V574M1030.5 580V593M1035.5 563V577M1036.5 567V577M1041.5 561V569M1042.5 565V572M1043.5 564V571M1045.5 562V567M1047.5 553V562M1049.5 556V563M1051.5 529V557M1052.5 526V543M1053.5 517V536M1058.5 528V542M1063.5 516V525M1065.5 514V528M1070.5 508V517M1076.5 500V512M1077.5 503V518M1082.5 503V513M1083.5 498V509M1088.5 504V514M1091.5 491V497M1092.5 488V493M1095.5 476V483M1097.5 471V476M1099.5 465V476M1100.5 465V477M1102.5 473V482M1105.5 502V517M1106.5 509V528M1107.5 516V530M1109.5 522V530M1110.5 521V535M1111.5 517V534M1112.5 527V544M1114.5 545V558M1115.5 553V564M1116.5 557V562M1118.5 560V567M1122.5 550V559M1133.5 542V558M1134.5 538V550M1135.5 538V547M1137.5 538V548M1138.5 540V548M1139.5 545V548M1141.5 547V558M1143.5 550V562M1145.5 561V571M1149.5 568V580M1150.5 571V580M1152.5 568V582M1153.5 574V584M1154.5 568V577M1155.5 577V598M1156.5 597V607M1158.5 574V591M1161.5 574V580M1162.5 578V591M1163.5 576V595M1165.5 594V605M1167.5 603V620M1172.5 570V589M1175.5 582V599M1176.5 583V605M1177.5 596V603M1180.5 597V610M1181.5 600V614M1185.5 593V598M1186.5 582V598M1189.5 581V600M1191.5 572V591M1192.5 576V584M1193.5 584V603M1196.5 609V625M1197.5 613V628M1199.5 606V632M1200.5 625V637M1207.5 595V611M1208.5 596V603M1209.5 590V606M1210.5 602V617M1211.5 600V623M1212.5 606V628M1214.5 606V622M1215.5 615V628M1217.5 622V631M1220.5 626V639M1222.5 621V639M1224.5 615V631M1225.5 610V633M1228.5 626V634M1230.5 634V650M1237.5 619V631M1239.5 612V626M1248.5 592V608M1249.5 591V604M1250.5 600V606M1251.5 606V614M1252.5 606V621M1254.5 623V632M1256.5 620V627M1257.5 610V620M1258.5 617V628M1259.5 609V623M1261.5 633V648M1266.5 609V620M1268.5 599V614M1269.5 599V615M1271.5 619V637M1272.5 626V638M1276.5 621V638M1278.5 618V626M1279.5 606V618M1281.5 599V609M1287.5 591V604M1289.5 606V627M1290.5 609V626M1292.5 591V608M1293.5 587V604M1300.5 571V583M1303.5 551V561M1304.5 553V560M1305.5 545V558M1308.5 538V553M1313.5 528V536M1314.5 525V531M1316.5 492V516M1317.5 488V499M1318.5 496V505M1322.5 504V516M1325.5 483V497M1326.5 497V515M1328.5 524V532M1330.5 524V529M1333.5 512V517M1339.5 486V495M1340.5 472V486M1344.5 463V476M1347.5 475V484M1348.5 478V485M1349.5 485V500M1350.5 500V518M1352.5 509V523M1353.5 504V515M1355.5 495V512M1358.5 508V516M1360.5 507V514M1361.5 512V520M1362.5 506V523M1365.5 515V529M1366.5 521V535M1368.5 525V535M1370.5 529V538M1373.5 540V547M1374.5 543V547M1375.5 544V551M1380.5 549V553M1381.5 544V552M1386.5 523V534M1387.5 522V530M1389.5 536V544M1396.5 513V523M1397.5 507V519M1401.5 488V497M1402.5 488V499M1404.5 482V495M1405.5 488V497M1406.5 491V497M1407.5 492V501M1409.5 493V499M1411.5 495V499M1412.5 492V498M1415.5 484V492M1416.5 480V490M1417.5 485V491M1418.5 486V496M1419.5 492V500M1420.5 497V505M1422.5 502V512M1426.5 502V510M1429.5 514V520M1430.5 516V520M1431.5 519V523M1432.5 518V525M1434.5 515V520M1435.5 512V516M1436.5 499V512M1437.5 491V506M1441.5 490V495M1443.5 501V507M1444.5 497V506M1445.5 506V515M1448.5 506V519M1453.5 483V502M1454.5 483V507M1455.5 483V510M1456.5 483V512M1458.5 495V518M1460.5 500V513M1461.5 490V500M1462.5 490V498M1463.5 485V496M1464.5 487V495M1465.5 489V495M1467.5 478V483M1473.5 453V461M1474.5 450V458M1475.5 450V457M1476.5 446V451M1477.5 449V461M1478.5 453V459M1480.5 474V490M1482.5 497V505M1485.5 499V509M1486.5 506V512M1487.5 500V506M1490.5 495V512M1492.5 486V502M1494.5 481V495M1497.5 475V489M1499.5 473V483M1500.5 474V481M1505.5 466V479M1507.5 474V482M1508.5 471V477M1510.5 468V476M1511.5 471V476M1512.5 470V478M1514.5 480V487" stroke="#e06464" stroke-width="1" fill="none" shape-rendering="crispEdges"/></svg>
<div class="a" style="left:707px;top:72px;width:244px;height:19px;background:linear-gradient(#d3ebf6,#a9c6d4);border:1px solid #7f98a5;border-top:none;border-left:none"></div><div class="t" style="left:710px;top:74px;letter-spacing:-0.14px">Equity curve: Grid Long Nicolas - 1 minute</div><svg class="a" style="left:916px;top:74px" width="13" height="13" viewBox="0 0 13 13"><rect x="1" y="1" width="11" height="11" rx="1.5" fill="#fff" stroke="#000" stroke-width="1.2"/><rect x="1" y="1" width="11" height="3" fill="#000"/></svg><svg class="a" style="left:933px;top:73px" width="14" height="14" viewBox="0 0 14 14"><circle cx="7" cy="7" r="6.5" fill="#3a3f44"/><path d="M3.9 3.9 L10.1 10.1 M10.1 3.9 L3.9 10.1" stroke="#fff" stroke-width="2"/></svg>
<div class="a" style="left:707px;top:285px;width:280px;height:19px;background:linear-gradient(#d3ebf6,#a9c6d4);border:1px solid #7f98a5;border-top:none;border-left:none"></div><div class="t" style="left:710px;top:287px;letter-spacing:-0.14px">ProOrder - Positions: Grid Long Nicolas - 1 minute</div><svg class="a" style="left:953px;top:287px" width="13" height="13" viewBox="0 0 13 13"><rect x="1" y="1" width="11" height="11" rx="1.5" fill="#fff" stroke="#000" stroke-width="1.2"/><rect x="1" y="1" width="11" height="3" fill="#000"/></svg><svg class="a" style="left:970px;top:286px" width="14" height="14" viewBox="0 0 14 14"><circle cx="7" cy="7" r="6.5" fill="#3a3f44"/><path d="M3.9 3.9 L10.1 10.1 M10.1 3.9 L3.9 10.1" stroke="#fff" stroke-width="2"/></svg>
<div class="a" style="left:707px;top:428px;width:67px;height:19px;background:linear-gradient(#d3ebf6,#a9c6d4);border:1px solid #7f98a5;border-top:none;border-left:none"></div><div class="t" style="left:710px;top:430px;letter-spacing:-0.14px">Price</div><svg class="a" style="left:736px;top:428px" width="16" height="16" viewBox="0 0 16 16"><path d="M3 13.2 L9 7.2" stroke="#000" stroke-width="3.8" stroke-linecap="round"/><path d="M8.4 2.6 L11.2 2.6 L11 5.6 L12.4 6 L14.9 5 L14.6 8.4 L11.6 10 L8.4 9 Z" fill="#fff" stroke="#000" stroke-width="1.3" stroke-linejoin="round"/><path d="M3 13.2 L9.3 6.9" stroke="#fff" stroke-width="1.8" stroke-linecap="round"/></svg><svg class="a" style="left:757px;top:430px" width="13" height="13" viewBox="0 0 13 13"><rect x="1" y="1" width="11" height="11" rx="1.5" fill="#fff" stroke="#000" stroke-width="1.2"/><rect x="1" y="1" width="11" height="3" fill="#000"/></svg>
<div class="a" style="left:1541px;top:83px;width:4px;height:1px;background:#6f8894"></div>
<div class="t" style="left:1547px;top:77px">8 000</div>
<div class="a" style="left:1541px;top:113px;width:4px;height:1px;background:#6f8894"></div>
<div class="t" style="left:1547px;top:107px">6 000</div>
<div class="a" style="left:1541px;top:144px;width:4px;height:1px;background:#6f8894"></div>
<div class="t" style="left:1547px;top:138px">4 000</div>
<div class="a" style="left:1541px;top:175px;width:4px;height:1px;background:#6f8894"></div>
<div class="t" style="left:1547px;top:169px">2 000</div>
<div class="a" style="left:1541px;top:205px;width:4px;height:1px;background:#6f8894"></div>
<div class="t" style="left:1547px;top:199px">0</div>
<div class="a" style="left:1541px;top:236px;width:4px;height:1px;background:#6f8894"></div>
<div class="t" style="left:1547px;top:230px">-2 000</div>
<div class="a" style="left:1541px;top:266px;width:4px;height:1px;background:#6f8894"></div>
<div class="t" style="left:1547px;top:260px">-4 000</div>
<div class="a" style="left:1541px;top:98px;width:4px;height:1px;background:#6f8894"></div>
<div class="a" style="left:1541px;top:128px;width:4px;height:1px;background:#6f8894"></div>
<div class="a" style="left:1541px;top:160px;width:4px;height:1px;background:#6f8894"></div>
<div class="a" style="left:1541px;top:190px;width:4px;height:1px;background:#6f8894"></div>
<div class="a" style="left:1541px;top:220px;width:4px;height:1px;background:#6f8894"></div>
<div class="a" style="left:1541px;top:251px;width:4px;height:1px;background:#6f8894"></div>
<div class="a" style="left:1541px;top:291px;width:4px;height:1px;background:#6f8894"></div>
<div class="t" style="left:1547px;top:285px">3</div>
<div class="a" style="left:1541px;top:312px;width:4px;height:1px;background:#6f8894"></div>
<div class="t" style="left:1547px;top:306px">2,5</div>
<div class="a" style="left:1541px;top:355px;width:4px;height:1px;background:#6f8894"></div>
<div class="t" style="left:1547px;top:349px">1,5</div>
<div class="a" style="left:1541px;top:376px;width:4px;height:1px;background:#6f8894"></div>
<div class="t" style="left:1547px;top:370px">1</div>
<div class="a" style="left:1541px;top:397px;width:4px;height:1px;background:#6f8894"></div>
<div class="t" style="left:1547px;top:391px">0,5</div>
<div class="a" style="left:1541px;top:418px;width:4px;height:1px;background:#6f8894"></div>
<div class="t b" style="left:1547px;top:411px;font-size:12.5px;line-height:15px">0</div>
<div class="a" style="left:1541px;top:465px;width:4px;height:1px;background:#6f8894"></div>
<div class="t" style="left:1547px;top:459px">76,7</div>
<div class="a" style="left:1541px;top:514px;width:4px;height:1px;background:#6f8894"></div>
<div class="t" style="left:1547px;top:508px">76,6</div>
<div class="a" style="left:1541px;top:613px;width:4px;height:1px;background:#6f8894"></div>
<div class="t" style="left:1547px;top:607px">76,4</div>
<div class="a" style="left:1541px;top:662px;width:4px;height:1px;background:#6f8894"></div>
<div class="t" style="left:1547px;top:656px">76,3</div>
<div class="a" style="left:1541px;top:711px;width:4px;height:1px;background:#6f8894"></div>
<div class="t" style="left:1547px;top:705px">76,2</div>
<div class="a" style="left:1541px;top:761px;width:4px;height:1px;background:#6f8894"></div>
<div class="t" style="left:1547px;top:755px">76,1</div>
<div class="a" style="left:1541px;top:563px;width:4px;height:1px;background:#6f8894"></div>
<div class="t b" style="left:1547px;top:556px;font-size:12.5px;line-height:15px">76,5</div>
<div class="a" style="left:1541px;top:214px;width:4px;height:1px;background:#e02f2f"></div>
<div class="t" style="left:1545px;top:206px;width:26px;height:16px;background:#dfe6ec;border:1px solid #7f98a5;color:#e02f2f;text-align:center;line-height:14px">-590</div>
<div class="a" style="left:1541px;top:333px;width:4px;height:1px;background:#30c030"></div>
<div class="t" style="left:1545px;top:325px;width:10px;height:16px;background:#dfe6ec;border:1px solid #7f98a5;color:#30c030;text-align:center;line-height:14px">2</div>
<div class="a" style="left:1541px;top:488px;width:4px;height:1px;background:#000"></div>
<div class="t" style="left:1545px;top:480px;width:37px;height:16px;background:#f7c400;border:1px solid #8a7a50;text-align:center;line-height:14px">76,653</div>
<div class="a" style="left:736px;top:779px;width:1px;height:5px;background:#6f8894"></div>
<div class="t" style="left:716px;top:785px;width:40px;text-align:center">08:00</div>
<div class="a" style="left:798px;top:779px;width:1px;height:5px;background:#6f8894"></div>
<div class="t" style="left:778px;top:785px;width:40px;text-align:center">09:00</div>
<div class="a" style="left:860px;top:779px;width:1px;height:5px;background:#6f8894"></div>
<div class="t" style="left:840px;top:785px;width:40px;text-align:center">10:00</div>
<div class="a" style="left:922px;top:779px;width:1px;height:5px;background:#6f8894"></div>
<div class="t" style="left:902px;top:785px;width:40px;text-align:center">11:00</div>
<div class="a" style="left:984px;top:779px;width:1px;height:5px;background:#6f8894"></div>
<div class="t" style="left:964px;top:785px;width:40px;text-align:center">12:00</div>
<div class="a" style="left:1046px;top:779px;width:1px;height:5px;background:#6f8894"></div>
<div class="t" style="left:1026px;top:785px;width:40px;text-align:center">13:00</div>
<div class="a" style="left:1108px;top:779px;width:1px;height:5px;background:#6f8894"></div>
<div class="t" style="left:1088px;top:785px;width:40px;text-align:center">14:00</div>
<div class="a" style="left:1171px;top:779px;width:1px;height:5px;background:#6f8894"></div>
<div class="t" style="left:1151px;top:785px;width:40px;text-align:center">15:00</div>
<div class="a" style="left:1233px;top:779px;width:1px;height:5px;background:#6f8894"></div>
<div class="t" style="left:1213px;top:785px;width:40px;text-align:center">16:00</div>
<div class="a" style="left:1295px;top:779px;width:1px;height:5px;background:#6f8894"></div>
<div class="t" style="left:1275px;top:785px;width:40px;text-align:center">17:00</div>
<div class="a" style="left:1357px;top:779px;width:1px;height:5px;background:#6f8894"></div>
<div class="t" style="left:1337px;top:785px;width:40px;text-align:center">18:00</div>
<div class="a" style="left:1419px;top:779px;width:1px;height:5px;background:#6f8894"></div>
<div class="t" style="left:1399px;top:785px;width:40px;text-align:center">19:00</div>
<div class="a" style="left:1481px;top:779px;width:1px;height:5px;background:#6f8894"></div>
<div class="t" style="left:1461px;top:785px;width:40px;text-align:center">20:00</div>
<div class="t" style="left:792px;top:428px;width:57px;height:17px;background:#f4c3c8;border:1px solid #f0868c;border-top:none;border-radius:0 0 4px 4px;text-align:center;line-height:17px">1@76,154</div>
<div class="t" style="left:1210px;top:428px;width:48px;height:17px;background:#f4c3c8;border:1px solid #f0868c;border-top:none;border-radius:0 0 4px 4px;text-align:center;line-height:17px">3 orders</div>
<div class="t" style="left:834px;top:761px;width:57px;height:18px;background:#c2e8c4;border:1px solid #4cc050;border-bottom:none;border-radius:4px 4px 0 0;text-align:center;line-height:17px">1@76,399</div>
<div class="t" style="left:797px;top:761px;width:54px;height:18px;background:#c2e8c4;border:1px solid #4cc050;border-bottom:none;border-radius:4px 4px 0 0;text-align:center;line-height:17px">1@76,165</div>
<div class="t" style="left:741px;top:761px;width:57px;height:18px;background:#c2e8c4;border:1px solid #4cc050;border-bottom:none;border-radius:4px 4px 0 0;text-align:center;line-height:17px">1@76,255</div>
<div class="t" style="left:956px;top:761px;width:57px;height:18px;background:#c2e8c4;border:1px solid #4cc050;border-bottom:none;border-radius:4px 4px 0 0;text-align:center;line-height:17px">1@76,615</div>
<div class="t" style="left:1207px;top:761px;width:57px;height:18px;background:#c2e8c4;border:1px solid #4cc050;border-bottom:none;border-radius:4px 4px 0 0;text-align:center;line-height:17px">1@76,355</div>
<div class="t" style="left:1285px;top:761px;width:57px;height:18px;background:#c2e8c4;border:1px solid #4cc050;border-bottom:none;border-radius:4px 4px 0 0;text-align:center;line-height:17px">1@76,578</div>
<div class="t" style="left:709px;top:766px;color:#111">© IT-Finance.com <i>Data is indicative</i></div>
<svg class="a" style="left:763px;top:707px" width="12" height="13" viewBox="0 0 12 13"><path d="M6 0.7 L11.3 6 L8.3 6 L8.3 12.3 L3.7 12.3 L3.7 6 L0.7 6 Z" fill="#30b030" stroke="#1a6e1a" stroke-width="1"/></svg>
<svg class="a" style="left:814px;top:708px" width="12" height="12" viewBox="0 0 12 12"><path d="M2.6 2.6 L9.4 9.4 M9.4 2.6 L2.6 9.4" stroke="#c02020" stroke-width="4.8" stroke-linecap="round"/><path d="M2.6 2.6 L9.4 9.4 M9.4 2.6 L2.6 9.4" stroke="#ee4444" stroke-width="3.4" stroke-linecap="round"/></svg>
<svg class="a" style="left:856px;top:625px" width="12" height="13" viewBox="0 0 12 13"><path d="M6 0.7 L11.3 6 L8.3 6 L8.3 12.3 L3.7 12.3 L3.7 6 L0.7 6 Z" fill="#30b030" stroke="#1a6e1a" stroke-width="1"/></svg>
<svg class="a" style="left:977px;top:530px" width="12" height="13" viewBox="0 0 12 13"><path d="M6 0.7 L11.3 6 L8.3 6 L8.3 12.3 L3.7 12.3 L3.7 6 L0.7 6 Z" fill="#30b030" stroke="#1a6e1a" stroke-width="1"/></svg>
<svg class="a" style="left:1307px;top:542px" width="12" height="13" viewBox="0 0 12 13"><path d="M6 0.7 L11.3 6 L8.3 6 L8.3 12.3 L3.7 12.3 L3.7 6 L0.7 6 Z" fill="#30b030" stroke="#1a6e1a" stroke-width="1"/></svg>
<svg class="a" style="left:1228px;top:626px" width="12" height="12" viewBox="0 0 12 12"><path d="M2.6 2.6 L9.4 9.4 M9.4 2.6 L2.6 9.4" stroke="#c02020" stroke-width="4.8" stroke-linecap="round"/><path d="M2.6 2.6 L9.4 9.4 M9.4 2.6 L2.6 9.4" stroke="#ee4444" stroke-width="3.4" stroke-linecap="round"/></svg>
<svg class="a" style="left:1228px;top:650px" width="12" height="13" viewBox="0 0 12 13"><path d="M6 0.7 L11.3 6 L8.3 6 L8.3 12.3 L3.7 12.3 L3.7 6 L0.7 6 Z" fill="#30b030" stroke="#1a6e1a" stroke-width="1"/></svg>
<svg class="a" style="left:815px;top:754px" width="14" height="8"><path d="M0 7 L7 0 L14 7 Z" fill="#30b030" stroke="#1a6e1a"/></svg>
<div class="a" style="left:706px;top:799px;width:890px;height:1px;background:#6f8894"></div>
<div class="a" style="left:706px;top:800px;width:890px;height:32px;background:linear-gradient(#bcd5e1,#9fbccb);border-top:1px solid #d6ebf5"></div>
<div class="a" style="left:706px;top:832px;width:890px;height:1px;background:#6f8894"></div>
<div class="a" style="left:706px;top:833px;width:890px;height:24px;background:linear-gradient(#cde5f0,#a6c3d1);border-top:1px solid #e0f2fa;border-bottom:1px solid #d0e6f0"></div>
<div class="a" style="left:706px;top:800px;width:1px;height:57px;background:#d6ebf5"></div>
<div class="a" style="left:703px;top:859px;width:897px;height:2px;background:#3c4a52"></div>
<svg class="a" style="left:710px;top:806px" width="22" height="22" viewBox="0 0 22 22"><defs><linearGradient id="ag" x1="0" y1="0" x2="1" y2="0"><stop offset="0" stop-color="#20b020"/><stop offset="1" stop-color="#7ae07a"/></linearGradient></defs><rect x="2.6" y="4.6" width="15" height="13.6" fill="#fff" stroke="#3a68d0" stroke-width="1.3"/><rect x="2" y="4" width="16" height="2.2" fill="#3a68d0"/><path d="M3.5 17 L6.5 13.5 L8 15 L12 10.5" stroke="#20c020" stroke-width="1" fill="none" stroke-dasharray="1.5 1"/><path d="M6.2 13 L7.6 15" stroke="#e02020" stroke-width="1.2"/><path d="M4.8 14.5 C6 8.5 9.5 6.8 14.5 6.5" stroke="#1a8a1a" stroke-width="3.6" fill="none"/><path d="M4.8 14.5 C6 8.5 9.5 6.8 14.5 6.5" stroke="url(#ag)" stroke-width="2.2" fill="none"/><path d="M13.8 1 L20.2 6.8 L13.8 11.5 Z" fill="#50d050" stroke="#1a8a1a" stroke-width="0.8"/><path d="M12 16 H20.5 L16.25 20.5 Z" fill="#000" stroke="#fff" stroke-width="1"/></svg>
<div class="a" style="left:735px;top:809px;width:749px;height:16px;background:linear-gradient(#a9c3cf,#c3d9e3);border:1px solid #8aa4b1;border-radius:3px"></div>
<div class="a" style="left:735px;top:809px;width:14px;height:16px;background:linear-gradient(#e2eef4,#a9c2ce);border:1px solid #7f98a5;border-radius:3px"></div>
<svg class="a" style="left:739px;top:813px" width="6" height="8"><path d="M5 0 V8 L0 4 Z" fill="#000"/></svg>
<div class="a" style="left:1250px;top:809px;width:218px;height:16px;background:linear-gradient(#c4e0ec,#a9c8d6);border:1px solid #7f98a5;box-shadow:inset 0 0 0 1px #e2f2f8;border-radius:3px"></div>
<div class="a" style="left:1355px;top:814px;width:7px;height:1px;background:#8aa0ac;box-shadow:0 2px 0 #8aa0ac,0 4px 0 #8aa0ac"></div>
<div class="a" style="left:1468px;top:809px;width:15px;height:16px;background:linear-gradient(#e2eef4,#a9c2ce);border:1px solid #7f98a5;border-radius:3px"></div>
<svg class="a" style="left:1473px;top:813px" width="6" height="8"><path d="M0 0 V8 L5 4 Z" fill="#000"/></svg>
<svg class="a" style="left:1488px;top:805px" width="110" height="24" viewBox="0 0 110 24"><defs><radialGradient id="mg" cx="0.35" cy="0.35" r="0.7"><stop offset="0" stop-color="#ffffff"/><stop offset="1" stop-color="#9a9a9a"/></radialGradient></defs><path d="M5.3 10 V21.6 M13.75 2 V21.6" stroke="#333" stroke-width="1"/><rect x="2.5" y="12.5" width="6" height="6.8" fill="#e04848" stroke="#333" stroke-width="1"/><rect x="10.6" y="4.3" width="6" height="15" fill="#40c040" stroke="#333" stroke-width="1"/><path d="M4.5 18.5 L11.5 11.5" stroke="#222" stroke-width="3.4" stroke-linecap="round"/><path d="M10.2 8.2 A3.2 3.2 0 1 0 15 11.5 L13 11 L11.8 9.8 Z" fill="#fff" stroke="#222" stroke-width="1"/><path d="M4.5 18.5 L11.8 11.2" stroke="#fff" stroke-width="1.7" stroke-linecap="round"/><circle cx="35.5" cy="9.6" r="5.2" fill="url(#mg)" stroke="#111" stroke-width="1.3"/><path d="M39.3 13.4 L45.5 19.8" stroke="#000" stroke-width="3" stroke-linecap="round"/><path d="M45.5 5 V14.5" stroke="#1028f0" stroke-width="1.4"/><path d="M43 6.5 L45.5 3.5 L48 6.5 Z M43 13 L45.5 16 L48 13 Z" fill="#1028f0"/><path d="M30 18.8 H38.5" stroke="#1028f0" stroke-width="1.4"/><path d="M31.5 16.3 L28.5 18.8 L31.5 21.3 Z M37 16.3 L40 18.8 L37 21.3 Z" fill="#1028f0"/><circle cx="63.6" cy="9.6" r="5.2" fill="#fff" stroke="#111" stroke-width="1.4"/><path d="M60.6 9.6 H66.6" stroke="#1028f0" stroke-width="1.6"/><path d="M67.4 13.4 L73.8 19.8" stroke="#000" stroke-width="3" stroke-linecap="round"/><circle cx="91.4" cy="9.6" r="5.2" fill="#fff" stroke="#111" stroke-width="1.4"/><path d="M88.4 9.6 H94.4 M91.4 6.6 V12.6" stroke="#1028f0" stroke-width="1.6"/><path d="M95.2 13.4 L101.6 19.8" stroke="#000" stroke-width="3" stroke-linecap="round"/></svg>
<div class="t" style="left:712px;top:839px">ProOrder chart: only to view trading system results</div>
<svg class="a" style="left:1490px;top:838px" width="16" height="13" viewBox="0 0 16 13"><rect x="2.5" y="1.5" width="13" height="11" rx="2" fill="#fff" stroke="#3a68c0"/><path d="M4 10 L7 5 L9 8 L13 3" stroke="#20a020" fill="none" stroke-width="1.2"/><path d="M5 9 L8 7" stroke="#d03030" stroke-width="1"/><path d="M1 3 H5 M3 1 V5" stroke="#3a68c0" stroke-width="1.3"/></svg>
<div class="t lnk" style="left:1511px;top:839px;letter-spacing:-0.3px">NZD/JPY Mini (-)</div>
</body></html>
